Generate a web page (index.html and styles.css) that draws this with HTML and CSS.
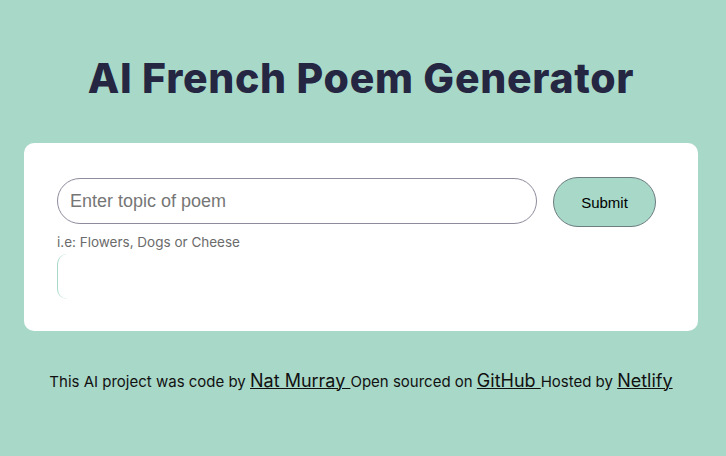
FILE: index.html
```html
<!DOCTYPE html>
<html lang="en">
<head>
<meta charset="utf-8">
<title>AI French Poem Generator</title>
<link rel="stylesheet" href="styles.css">
</head>
<body>
<div class="container">
  <h1 class="title">AI French Poem Generator</h1>
  <div class="card">
    <form class="form">
      <input class="topic" type="text" placeholder="Enter topic of poem">
      <button class="submit" type="button">Submit</button>
    </form>
    <div class="hint">i.e: Flowers, Dogs or Cheese</div>
    <div class="poem"></div>
  </div>
  <footer class="footer">This AI project was code by <a href="#">Nat Murray </a>Open sourced on <a href="#">GitHub </a>Hosted by <a href="#">Netlify</a></footer>
</div>
</body>
</html>
```
FILE: styles.css
```css
html, body {
  margin: 0;
  padding: 0;
}
body {
  background: #a8d8c8;
  font-family: Inter, "Noto Sans", sans-serif;
  width: 726px;
  height: 456px;
  overflow: hidden;
}
.container {
  padding: 0 28px 0 24px;
}
.title {
  margin: 0;
  padding: 54px 0 41px;
  height: 143px;
  box-sizing: border-box;
  text-align: center;
  font-family: Inter, sans-serif;
  font-weight: 800;
  font-size: 41px;
  line-height: 48px;
  color: #252641;
  letter-spacing: 0.7px;
  white-space: nowrap;
}
.card {
  background: #fff;
  border-radius: 10px;
  height: 188px;
  box-sizing: border-box;
  padding: 34px 33px 0 33px;
}
.form {
  display: flex;
  align-items: flex-start;
  gap: 16px;
  margin: 0;
}
.topic {
  width: 480px;
  height: 46px;
  box-sizing: border-box;
  border: 1px solid #8e8b9c;
  border-radius: 23px;
  padding: 0 12px;
  font-family: "Liberation Sans", Arial, sans-serif;
  font-size: 18px;
  color: #333;
  outline: none;
  margin: 1px 0 0 0;
}
.topic::placeholder {
  color: #767676;
}
.submit {
  width: 103px;
  height: 50px;
  box-sizing: border-box;
  background: #a8d8c8;
  border: 1px solid #6d7d80;
  border-radius: 25px;
  font-family: "Liberation Sans", Arial, sans-serif;
  font-size: 15px;
  color: #000;
  padding: 0;
}
.hint {
  margin-top: 6px;
  font-size: 13.5px;
  line-height: 19px;
  color: #6b6b6b;
}
.poem {
  margin-top: 2px;
  height: 45px;
  width: 300px;
  border-left: 1px solid #a8d8c8;
  border-radius: 10px;
}
.footer {
  padding-top: 38px;
  text-align: center;
  font-size: 15px;
  line-height: 24px;
  color: #111;
  white-space: nowrap;
}
.footer a {
  color: #111;
  font-size: 18px;
  text-decoration: underline;
  text-decoration-thickness: 1px;
}
```
